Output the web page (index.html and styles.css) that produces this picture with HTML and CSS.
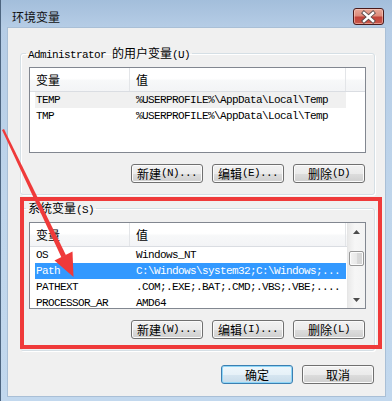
FILE: index.html
```html
<!DOCTYPE html>
<html lang="zh-CN">
<head>
<meta charset="utf-8">
<title>环境变量</title>
<link rel="stylesheet" href="styles.css">
</head>
<body>
<div class="win">
  <div class="titlebar">
    <span class="title">环境变量</span>
    <div class="close">
      <svg width="29" height="14" viewBox="0 0 29 14">
        <path d="M10 3 L19 11 M19 3 L10 11" stroke="#5a4a4a" stroke-width="4.2" stroke-linecap="square"/>
        <path d="M10 3 L19 11 M19 3 L10 11" stroke="#ffffff" stroke-width="2.4" stroke-linecap="square"/>
      </svg>
    </div>
  </div>
  <div class="client">
    <fieldset class="group">
      <legend><span class="l">Administrator </span>的用户变量<span class="l">(U)</span></legend>
      <div class="list">
        <div class="lmain">
          <div class="lhead">
            <div class="hc c1">变量</div>
            <div class="hc c2">值</div>
            <div class="hc hfill"></div>
          </div>
          <div class="row inact"><span class="cell c1 l">TEMP</span><span class="cell c2 l">%USERPROFILE%\AppData\Local\Temp</span></div>
          <div class="row"><span class="cell c1 l">TMP</span><span class="cell c2 l">%USERPROFILE%\AppData\Local\Temp</span></div>
        </div>
      </div>
      <div class="btnrow">
        <div class="btn">新建<span class="l">(N)...</span></div>
        <div class="btn">编辑<span class="l">(E)...</span></div>
        <div class="btn">删除<span class="l">(D)</span></div>
      </div>
    </fieldset>

    <fieldset class="group g2">
      <legend>系统变量<span class="l">(S)</span></legend>
      <div class="list tall">
        <div class="lmain">
          <div class="lhead">
            <div class="hc c1">变量</div>
            <div class="hc c2">值</div>
          </div>
          <div class="row"><span class="cell c1 l">OS</span><span class="cell c2 l">Windows_NT</span></div>
          <div class="row sel"><span class="cell c1 l">Path</span><span class="cell c2 l">C:\Windows\system32;C:\Windows;...</span></div>
          <div class="row"><span class="cell c1 l">PATHEXT</span><span class="cell c2 l">.COM;.EXE;.BAT;.CMD;.VBS;.VBE;....</span></div>
          <div class="row"><span class="cell c1 l">PROCESSOR_AR</span><span class="cell c2 l">AMD64</span></div>
        </div>
        <div class="vscroll">
          <div class="sarrow">
            <svg width="7" height="4" viewBox="0 0 7 4"><path d="M0 4 L3.5 0 L7 4 Z" fill="#4b4b4b"/></svg>
          </div>
          <div class="strack">
            <div class="thumb"></div>
          </div>
          <div class="sarrow">
            <svg width="7" height="4" viewBox="0 0 7 4"><path d="M0 0 L3.5 4 L7 0 Z" fill="#4b4b4b"/></svg>
          </div>
        </div>
      </div>
      <div class="btnrow">
        <div class="btn">新建<span class="l">(W)...</span></div>
        <div class="btn">编辑<span class="l">(I)...</span></div>
        <div class="btn">删除<span class="l">(L)</span></div>
      </div>
    </fieldset>

    <div class="dlgbtns">
      <div class="btn def">确定</div>
      <div class="btn">取消</div>
    </div>

    <div class="redbox"></div>
  </div>

  <svg class="arrow" width="392" height="401" viewBox="0 0 392 401">
    <polygon points="4,129 2,130 61.5,257.5 66,255.3" fill="#ef3a3a"/>
    <polygon points="73.5,277 54.5,260.5 72.5,251.5" fill="#ef3a3a"/>
  </svg>
</div>
</body>
</html>
```
FILE: styles.css
```css
* { box-sizing: border-box; }
html, body { margin: 0; padding: 0; }
body {
  width: 392px;
  height: 401px;
  overflow: hidden;
  background: #bcd3ea;
  font-family: "Noto Sans CJK SC", sans-serif;
  font-size: 12px;
  color: #000;
}
.l {
  font-family: "Liberation Mono", monospace;
  font-size: 11px;
  letter-spacing: -0.6px;
}
.win {
  position: relative;
  width: 392px;
  height: 401px;
  display: flex;
  flex-direction: column;
  padding: 0 7px 5px 7px;
  border-left: 1px solid #4d6580;
  background: linear-gradient(to bottom, #a3bedb 0px, #b6cde6 28px, #bfd5eb 200px, #c2d8ee 401px);
}
.titlebar {
  height: 28px;
  display: flex;
  justify-content: space-between;
  align-items: flex-start;
  padding: 0 1px 0 4px;
}
.title {
  padding-top: 9px;
  line-height: 16px;
  font-size: 12px;
  color: #111;
}
.close {
  margin-top: 8px;
  width: 31px;
  height: 17px;
  border: 1px solid #4a1b1b;
  border-radius: 3px;
  background: linear-gradient(to bottom, #e9a898 0%, #dd8c7c 45%, #c2433a 55%, #c9584a 100%);
  box-shadow: inset 0 0 0 1px rgba(255, 220, 210, 0.5);
  display: flex;
  align-items: center;
  justify-content: center;
}
.close svg { display: block; }
.client {
  flex: 1;
  position: relative;
  background: #f0f0f0;
  box-shadow: 0 0 0 1px #a9bfd6;
  display: flex;
  flex-direction: column;
}
.group {
  margin: 18px 10px 0 12px;
  min-width: 0;
  border: 1px solid #d5dfe5;
  border-radius: 3px;
  padding: 7px 8px 11px 8px;
  box-shadow: 1px 1px 0 #fff, inset 1px 1px 0 #fff;
}
.g2 { margin-top: 6px; }
.group legend {
  margin-left: -3px;
  padding: 0 2px;
  line-height: 14px;
  height: 14px;
  color: #000;
}
.list {
  height: 86px;
  border: 1px solid #828790;
  background: #fff;
  display: flex;
  overflow: hidden;
}
.list.tall { height: 87px; }
.lmain {
  flex: 1;
  min-width: 0;
  overflow: hidden;
}
.lhead {
  height: 24px;
  display: flex;
  background: linear-gradient(to bottom, #ffffff 0%, #ffffff 45%, #f7f8f9 55%, #f3f4f6 100%);
  border-bottom: 1px solid #dadde2;
}
.hc {
  line-height: 23px;
  padding-left: 6px;
  border-right: 1px solid #e3e5e8;
  white-space: nowrap;
}
.hc.c1 { width: 100px; }
.hc.c2 { width: 216px; }
.hc.hfill { flex: 1; border-right: 0; }
.row {
  margin-left: 5px;
  width: 311px;
  height: 16px;
  line-height: 16px;
  display: flex;
  white-space: nowrap;
  color: #000;
}
.row.inact { background: #f0f0f0; }
.row.sel { background: #3399ff; color: #fff; }
.cell { padding-left: 1px; overflow: hidden; }
.cell.c1 { width: 100px; flex: none; }
.cell.c2 { flex: 1; }
.vscroll {
  width: 18px;
  flex: none;
  display: flex;
  flex-direction: column;
  border-left: 1px solid #e6e6e6;
  background: linear-gradient(to right, #e9e9e9, #f6f6f6 40%, #f3f3f3);
}
.sarrow {
  height: 17px;
  display: flex;
  align-items: center;
  justify-content: center;
}
.sarrow svg { display: block; }
.strack {
  flex: 1;
  padding-top: 11px;
}
.thumb {
  margin: 0 1px;
  height: 15px;
  border: 1px solid #979797;
  border-radius: 2px;
  background: linear-gradient(to right, #f3f3f3, #e8e8e8 50%, #d9d9d9 51%, #d4d4d4);
  box-shadow: inset 0 0 0 1px #fbfbfb;
}
.btnrow {
  margin-top: 11px;
  display: flex;
  justify-content: flex-end;
  gap: 9px;
  padding-right: 1px;
}
.btn {
  width: 72px;
  height: 19px;
  border: 1px solid #707070;
  border-radius: 3px;
  background: linear-gradient(to bottom, #f2f2f2 0%, #ebebeb 50%, #dddddd 51%, #cfcfcf 100%);
  box-shadow: inset 0 0 0 1px #fbfbfb;
  display: flex;
  align-items: center;
  justify-content: center;
  line-height: 17px;
  white-space: nowrap;
  color: #000;
}
.btn.def {
  border-color: #3c7fb1;
  box-shadow: inset 0 0 0 1px #8fd6f7;
  background: linear-gradient(to bottom, #eef7fc 0%, #e6f1f8 50%, #d6e6f1 51%, #c9dcea 100%);
}
.dlgbtns {
  margin: 14px 10px 0 0;
  display: flex;
  justify-content: flex-end;
  gap: 9px;
  padding-right: 1px;
}
.redbox {
  position: absolute;
  left: 12px;
  top: 169px;
  width: 362px;
  height: 152px;
  border: 4px solid #ef3a3a;
  pointer-events: none;
}
.arrow {
  position: absolute;
  left: -1px;
  top: 0;
  pointer-events: none;
}
```
